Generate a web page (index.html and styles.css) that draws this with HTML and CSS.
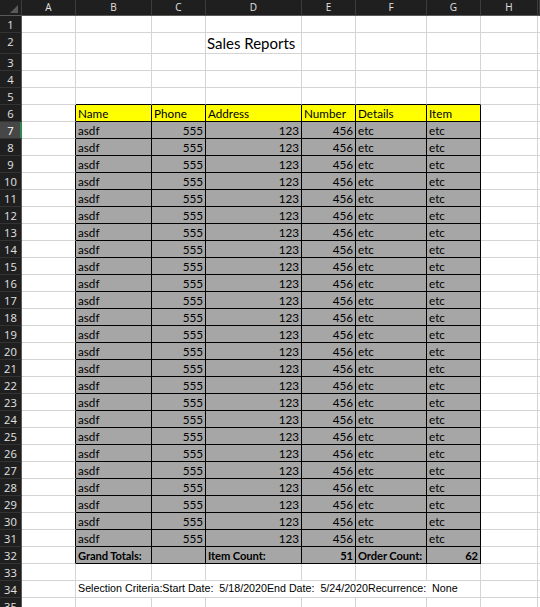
FILE: index.html
```html
<!DOCTYPE html>
<html>
<head>
<meta charset="utf-8">
<title>Sales Reports</title>
<link rel="stylesheet" href="styles.css">
</head>
<body>
<div class="sheet">
  <div class="row hdr">
    <div class="corner"><svg width="22" height="16" viewBox="0 0 22 16"><polygon points="18,5 18,13 10,13" fill="#5a5a5a"/></svg></div>
    <div class="ch">A</div><div class="ch">B</div><div class="ch">C</div><div class="ch">D</div><div class="ch">E</div><div class="ch">F</div><div class="ch">G</div><div class="ch">H</div><div class="ch"></div>
  </div>
  <div class="row"><div class="rh">1</div><div class="c"></div><div class="c"></div><div class="c"></div><div class="c"></div><div class="c"></div><div class="c"></div><div class="c"></div><div class="c"></div><div class="c"></div></div>
  <div class="row tall"><div class="rh">2</div><div class="c"></div><div class="c"></div><div class="c"></div><div class="c title">Sales Reports</div><div class="c"></div><div class="c"></div><div class="c"></div><div class="c"></div><div class="c"></div></div>
  <div class="row"><div class="rh">3</div><div class="c"></div><div class="c"></div><div class="c"></div><div class="c"></div><div class="c"></div><div class="c"></div><div class="c"></div><div class="c"></div><div class="c"></div></div>
  <div class="row"><div class="rh">4</div><div class="c"></div><div class="c"></div><div class="c"></div><div class="c"></div><div class="c"></div><div class="c"></div><div class="c"></div><div class="c"></div><div class="c"></div></div>
  <div class="row above"><div class="rh">5</div><div class="c"></div><div class="c"></div><div class="c"></div><div class="c"></div><div class="c"></div><div class="c"></div><div class="c"></div><div class="c"></div><div class="c"></div></div>
  <div class="row data head"><div class="rh">6</div><div class="c"></div><div class="c">Name</div><div class="c">Phone</div><div class="c">Address</div><div class="c">Number</div><div class="c">Details</div><div class="c">Item</div><div class="c"></div><div class="c"></div></div>
  <div class="row data gray"><div class="rh sel">7</div><div class="c"></div><div class="c">asdf</div><div class="c n">555</div><div class="c n">123</div><div class="c n">456</div><div class="c">etc</div><div class="c">etc</div><div class="c"></div><div class="c"></div></div>
  <div class="row data gray"><div class="rh">8</div><div class="c"></div><div class="c">asdf</div><div class="c n">555</div><div class="c n">123</div><div class="c n">456</div><div class="c">etc</div><div class="c">etc</div><div class="c"></div><div class="c"></div></div>
  <div class="row data gray"><div class="rh">9</div><div class="c"></div><div class="c">asdf</div><div class="c n">555</div><div class="c n">123</div><div class="c n">456</div><div class="c">etc</div><div class="c">etc</div><div class="c"></div><div class="c"></div></div>
  <div class="row data gray"><div class="rh">10</div><div class="c"></div><div class="c">asdf</div><div class="c n">555</div><div class="c n">123</div><div class="c n">456</div><div class="c">etc</div><div class="c">etc</div><div class="c"></div><div class="c"></div></div>
  <div class="row data gray"><div class="rh">11</div><div class="c"></div><div class="c">asdf</div><div class="c n">555</div><div class="c n">123</div><div class="c n">456</div><div class="c">etc</div><div class="c">etc</div><div class="c"></div><div class="c"></div></div>
  <div class="row data gray"><div class="rh">12</div><div class="c"></div><div class="c">asdf</div><div class="c n">555</div><div class="c n">123</div><div class="c n">456</div><div class="c">etc</div><div class="c">etc</div><div class="c"></div><div class="c"></div></div>
  <div class="row data gray"><div class="rh">13</div><div class="c"></div><div class="c">asdf</div><div class="c n">555</div><div class="c n">123</div><div class="c n">456</div><div class="c">etc</div><div class="c">etc</div><div class="c"></div><div class="c"></div></div>
  <div class="row data gray"><div class="rh">14</div><div class="c"></div><div class="c">asdf</div><div class="c n">555</div><div class="c n">123</div><div class="c n">456</div><div class="c">etc</div><div class="c">etc</div><div class="c"></div><div class="c"></div></div>
  <div class="row data gray"><div class="rh">15</div><div class="c"></div><div class="c">asdf</div><div class="c n">555</div><div class="c n">123</div><div class="c n">456</div><div class="c">etc</div><div class="c">etc</div><div class="c"></div><div class="c"></div></div>
  <div class="row data gray"><div class="rh">16</div><div class="c"></div><div class="c">asdf</div><div class="c n">555</div><div class="c n">123</div><div class="c n">456</div><div class="c">etc</div><div class="c">etc</div><div class="c"></div><div class="c"></div></div>
  <div class="row data gray"><div class="rh">17</div><div class="c"></div><div class="c">asdf</div><div class="c n">555</div><div class="c n">123</div><div class="c n">456</div><div class="c">etc</div><div class="c">etc</div><div class="c"></div><div class="c"></div></div>
  <div class="row data gray"><div class="rh">18</div><div class="c"></div><div class="c">asdf</div><div class="c n">555</div><div class="c n">123</div><div class="c n">456</div><div class="c">etc</div><div class="c">etc</div><div class="c"></div><div class="c"></div></div>
  <div class="row data gray"><div class="rh">19</div><div class="c"></div><div class="c">asdf</div><div class="c n">555</div><div class="c n">123</div><div class="c n">456</div><div class="c">etc</div><div class="c">etc</div><div class="c"></div><div class="c"></div></div>
  <div class="row data gray"><div class="rh">20</div><div class="c"></div><div class="c">asdf</div><div class="c n">555</div><div class="c n">123</div><div class="c n">456</div><div class="c">etc</div><div class="c">etc</div><div class="c"></div><div class="c"></div></div>
  <div class="row data gray"><div class="rh">21</div><div class="c"></div><div class="c">asdf</div><div class="c n">555</div><div class="c n">123</div><div class="c n">456</div><div class="c">etc</div><div class="c">etc</div><div class="c"></div><div class="c"></div></div>
  <div class="row data gray"><div class="rh">22</div><div class="c"></div><div class="c">asdf</div><div class="c n">555</div><div class="c n">123</div><div class="c n">456</div><div class="c">etc</div><div class="c">etc</div><div class="c"></div><div class="c"></div></div>
  <div class="row data gray"><div class="rh">23</div><div class="c"></div><div class="c">asdf</div><div class="c n">555</div><div class="c n">123</div><div class="c n">456</div><div class="c">etc</div><div class="c">etc</div><div class="c"></div><div class="c"></div></div>
  <div class="row data gray"><div class="rh">24</div><div class="c"></div><div class="c">asdf</div><div class="c n">555</div><div class="c n">123</div><div class="c n">456</div><div class="c">etc</div><div class="c">etc</div><div class="c"></div><div class="c"></div></div>
  <div class="row data gray"><div class="rh">25</div><div class="c"></div><div class="c">asdf</div><div class="c n">555</div><div class="c n">123</div><div class="c n">456</div><div class="c">etc</div><div class="c">etc</div><div class="c"></div><div class="c"></div></div>
  <div class="row data gray"><div class="rh">26</div><div class="c"></div><div class="c">asdf</div><div class="c n">555</div><div class="c n">123</div><div class="c n">456</div><div class="c">etc</div><div class="c">etc</div><div class="c"></div><div class="c"></div></div>
  <div class="row data gray"><div class="rh">27</div><div class="c"></div><div class="c">asdf</div><div class="c n">555</div><div class="c n">123</div><div class="c n">456</div><div class="c">etc</div><div class="c">etc</div><div class="c"></div><div class="c"></div></div>
  <div class="row data gray"><div class="rh">28</div><div class="c"></div><div class="c">asdf</div><div class="c n">555</div><div class="c n">123</div><div class="c n">456</div><div class="c">etc</div><div class="c">etc</div><div class="c"></div><div class="c"></div></div>
  <div class="row data gray"><div class="rh">29</div><div class="c"></div><div class="c">asdf</div><div class="c n">555</div><div class="c n">123</div><div class="c n">456</div><div class="c">etc</div><div class="c">etc</div><div class="c"></div><div class="c"></div></div>
  <div class="row data gray"><div class="rh">30</div><div class="c"></div><div class="c">asdf</div><div class="c n">555</div><div class="c n">123</div><div class="c n">456</div><div class="c">etc</div><div class="c">etc</div><div class="c"></div><div class="c"></div></div>
  <div class="row data gray"><div class="rh">31</div><div class="c"></div><div class="c">asdf</div><div class="c n">555</div><div class="c n">123</div><div class="c n">456</div><div class="c">etc</div><div class="c">etc</div><div class="c"></div><div class="c"></div></div>
  <div class="row data gray totals"><div class="rh">32</div><div class="c"></div><div class="c">Grand Totals:</div><div class="c"></div><div class="c">Item Count:</div><div class="c n">51</div><div class="c">Order Count:</div><div class="c n">62</div><div class="c"></div><div class="c"></div></div>
  <div class="row"><div class="rh">33</div><div class="c"></div><div class="c"></div><div class="c"></div><div class="c"></div><div class="c"></div><div class="c"></div><div class="c"></div><div class="c"></div><div class="c"></div></div>
  <div class="row"><div class="rh">34</div><div class="c"></div><div class="c criteria">Selection Criteria:Start Date:&nbsp; 5/18/2020End Date:&nbsp; 5/24/2020Recurrence:&nbsp; None</div><div class="c"></div><div class="c"></div></div>
  <div class="row"><div class="rh">35</div><div class="c"></div><div class="c"></div><div class="c"></div><div class="c"></div><div class="c"></div><div class="c"></div><div class="c"></div><div class="c"></div><div class="c"></div></div>
</div>
</body>
</html>
```

FILE: styles.css
```css
html, body {
  margin: 0;
  padding: 0;
  background: #ffffff;
  overflow: hidden;
}

.sheet {
  display: flex;
  flex-direction: column;
  width: 540px;
  height: 607px;
  overflow: hidden;
  font-family: Lato, "Open Sans", sans-serif;
  font-size: 11.7px;
  color: #000000;
}

.row {
  flex: none;
  display: grid;
  grid-template-columns: 22px 54px 76px 54px 96px 54px 71px 54px 57px 2px;
  grid-template-rows: minmax(0, 1fr);
  height: 17px;
}

.row.tall {
  height: 21px;
}

.c {
  box-sizing: border-box;
  min-width: 0;
  min-height: 0;
  border-right: 1px solid #d4d4d4;
  border-bottom: 1px solid #d4d4d4;
  padding: 0 2px;
  line-height: 17px;
  white-space: nowrap;
  overflow: visible;
}

.n {
  text-align: right;
}

/* column header band */
.hdr {
  height: 16px;
}

.corner,
.ch {
  box-sizing: border-box;
  background: #1f1f1f;
  border-right: 1px solid #3c3c3c;
  border-bottom: 1px solid #5a5a5a;
}

.corner svg {
  display: block;
}

.ch {
  color: #e2e2e2;
  font-family: "Open Sans", sans-serif;
  font-size: 10px;
  line-height: 15px;
  text-align: center;
}

/* row headers */
.rh {
  box-sizing: border-box;
  min-height: 0;
  background: #1f1f1f;
  color: #e2e2e2;
  border-right: 1px solid #5a5a5a;
  border-bottom: 1px solid #333333;
  font-family: "Open Sans", sans-serif;
  font-size: 11.2px;
  line-height: 17px;
  text-align: center;
  overflow: hidden;
}

.rh.sel {
  background: #474747;
  color: #ffffff;
  border-right-color: #2a8a4f;
  box-shadow: inset -1px 0 0 #2a8a4f;
}

/* title */
.title {
  font-size: 15px;
  line-height: 20px;
  padding-left: 1px;
}

/* table borders */
.above .c:nth-child(n+3):nth-child(-n+8) {
  border-bottom-color: #000000;
}

.data .c:nth-child(2) {
  border-right-color: #000000;
}

.data .c:nth-child(n+3):nth-child(-n+8) {
  border-right-color: #000000;
  border-bottom-color: #000000;
}

.head .c:nth-child(n+3):nth-child(-n+8) {
  background: #ffff00;
}

.gray .c:nth-child(n+3):nth-child(-n+8) {
  background: #a6a6a6;
}

.totals .c {
  font-weight: 700;
  font-size: 11.2px;
  letter-spacing: -0.1px;
}

/* selection criteria line */
.criteria {
  grid-column: span 6;
  font-family: "Liberation Sans", Arial, sans-serif;
  font-size: 10.7px;
  line-height: 15px;
}
```
